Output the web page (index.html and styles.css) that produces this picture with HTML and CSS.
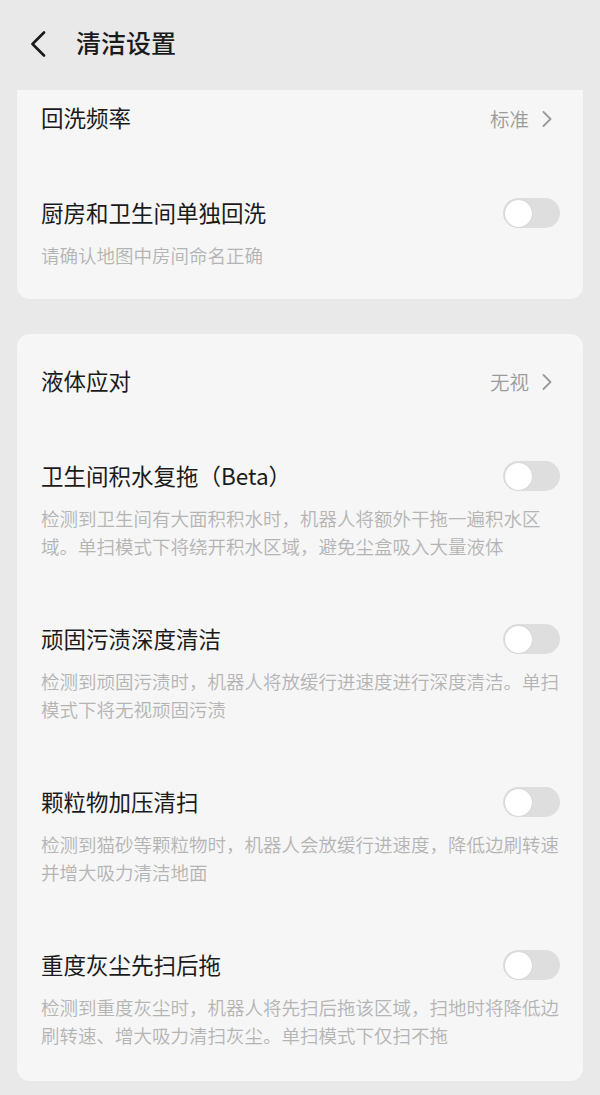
FILE: index.html
```html
<!DOCTYPE html>
<html lang="zh">
<head>
<meta charset="utf-8">
<title>清洁设置</title>
<link rel="stylesheet" href="styles.css">
</head>
<body>
<header class="topbar">
  <svg class="back" width="16" height="26" viewBox="0 0 16 26"><path d="M14 1.5 L2.5 13 L14 24.5" fill="none" stroke="#1a1a1a" stroke-width="2.6" stroke-linecap="round" stroke-linejoin="round"/></svg>
  <h1 class="title">清洁设置</h1>
</header>
<main class="content">
  <section class="card card-clipped">
    <div class="item item-first">
      <div class="row">
        <span class="label">回洗频率</span>
        <span class="value">标准<svg class="chev" width="10" height="16" viewBox="0 0 10 16"><path d="M1.5 1 L8.5 8 L1.5 15" fill="none" stroke="#9a9a9a" stroke-width="1.8" stroke-linecap="round" stroke-linejoin="round"/></svg></span>
      </div>
    </div>
    <div class="item">
      <div class="row">
        <span class="label">厨房和卫生间单独回洗</span>
        <span class="toggle"><span class="knob"></span></span>
      </div>
      <p class="desc">请确认地图中房间命名正确</p>
    </div>
  </section>

  <section class="card">
    <div class="item">
      <div class="row">
        <span class="label">液体应对</span>
        <span class="value">无视<svg class="chev" width="10" height="16" viewBox="0 0 10 16"><path d="M1.5 1 L8.5 8 L1.5 15" fill="none" stroke="#9a9a9a" stroke-width="1.8" stroke-linecap="round" stroke-linejoin="round"/></svg></span>
      </div>
    </div>
    <div class="item">
      <div class="row">
        <span class="label">卫生间积水复拖（Beta）</span>
        <span class="toggle"><span class="knob"></span></span>
      </div>
      <p class="desc">检测到卫生间有大面积积水时，机器人将额外干拖一遍积水区域。单扫模式下将绕开积水区域，避免尘盒吸入大量液体</p>
    </div>
    <div class="item">
      <div class="row">
        <span class="label">顽固污渍深度清洁</span>
        <span class="toggle"><span class="knob"></span></span>
      </div>
      <p class="desc">检测到顽固污渍时，机器人将放缓行进速度进行深度清洁。单扫模式下将无视顽固污渍</p>
    </div>
    <div class="item">
      <div class="row">
        <span class="label">颗粒物加压清扫</span>
        <span class="toggle"><span class="knob"></span></span>
      </div>
      <p class="desc">检测到猫砂等颗粒物时，机器人会放缓行进速度，降低边刷转速并增大吸力清洁地面</p>
    </div>
    <div class="item">
      <div class="row">
        <span class="label">重度灰尘先扫后拖</span>
        <span class="toggle"><span class="knob"></span></span>
      </div>
      <p class="desc">检测到重度灰尘时，机器人将先扫后拖该区域，扫地时将降低边刷转速、增大吸力清扫灰尘。单扫模式下仅扫不拖</p>
    </div>
  </section>
</main>
</body>
</html>
```

FILE: styles.css
```css
* { box-sizing: border-box; }

html, body {
  margin: 0;
  padding: 0;
}

body {
  background: #e9e9e9;
  font-family: "Noto Sans CJK SC", "Noto Sans", sans-serif;
  color: #1b1b1b;
  width: 600px;
  min-height: 1095px;
}

.topbar {
  height: 88px;
  margin-bottom: 2px;
  display: flex;
  align-items: center;
  padding-left: 30px;
}

.back {
  display: block;
  flex: none;
}

.title {
  margin: 0 0 0 30px;
  padding-bottom: 4px;
  font-size: 25px;
  font-weight: 500;
  line-height: 32px;
  color: #1b1b1b;
}

.content {
  padding: 0 17px;
  display: flex;
  flex-direction: column;
  gap: 35px;
}

.card {
  background: #f6f6f6;
  border-radius: 13px;
  padding: 0 23px 0 24px;
}

.card-clipped {
  border-top-left-radius: 0;
  border-top-right-radius: 0;
  padding-bottom: 0;
}

.item {
  padding: 31.5px 0;
}

.item-first {
  padding-top: 12px;
}

.card-clipped .item:last-child {
  padding-bottom: 29.5px;
}

.row {
  display: flex;
  align-items: center;
  justify-content: space-between;
  height: 32px;
}

.label {
  font-size: 22.5px;
  line-height: 32px;
  padding-bottom: 3px;
  color: #1b1b1b;
  white-space: nowrap;
}

.value {
  display: flex;
  align-items: center;
  gap: 13px;
  font-size: 19.5px;
  font-weight: 350;
  color: #9b9b9b;
  margin-right: 8px;
}

.value .chev {
  margin-top: 2px;
}

.chev {
  display: block;
}

.toggle {
  position: relative;
  width: 57px;
  height: 30px;
  border-radius: 15px;
  background: #dedede;
  flex: none;
}

.knob {
  position: absolute;
  left: 2px;
  top: 1.5px;
  width: 27px;
  height: 27px;
  border-radius: 50%;
  background: #ffffff;
  box-shadow: 0 0 1.5px rgba(0, 0, 0, 0.12);
}

.desc {
  margin: 12px 0 0;
  font-size: 18.5px;
  font-weight: 350;
  line-height: 28px;
  color: #b4b4b4;
}
```
